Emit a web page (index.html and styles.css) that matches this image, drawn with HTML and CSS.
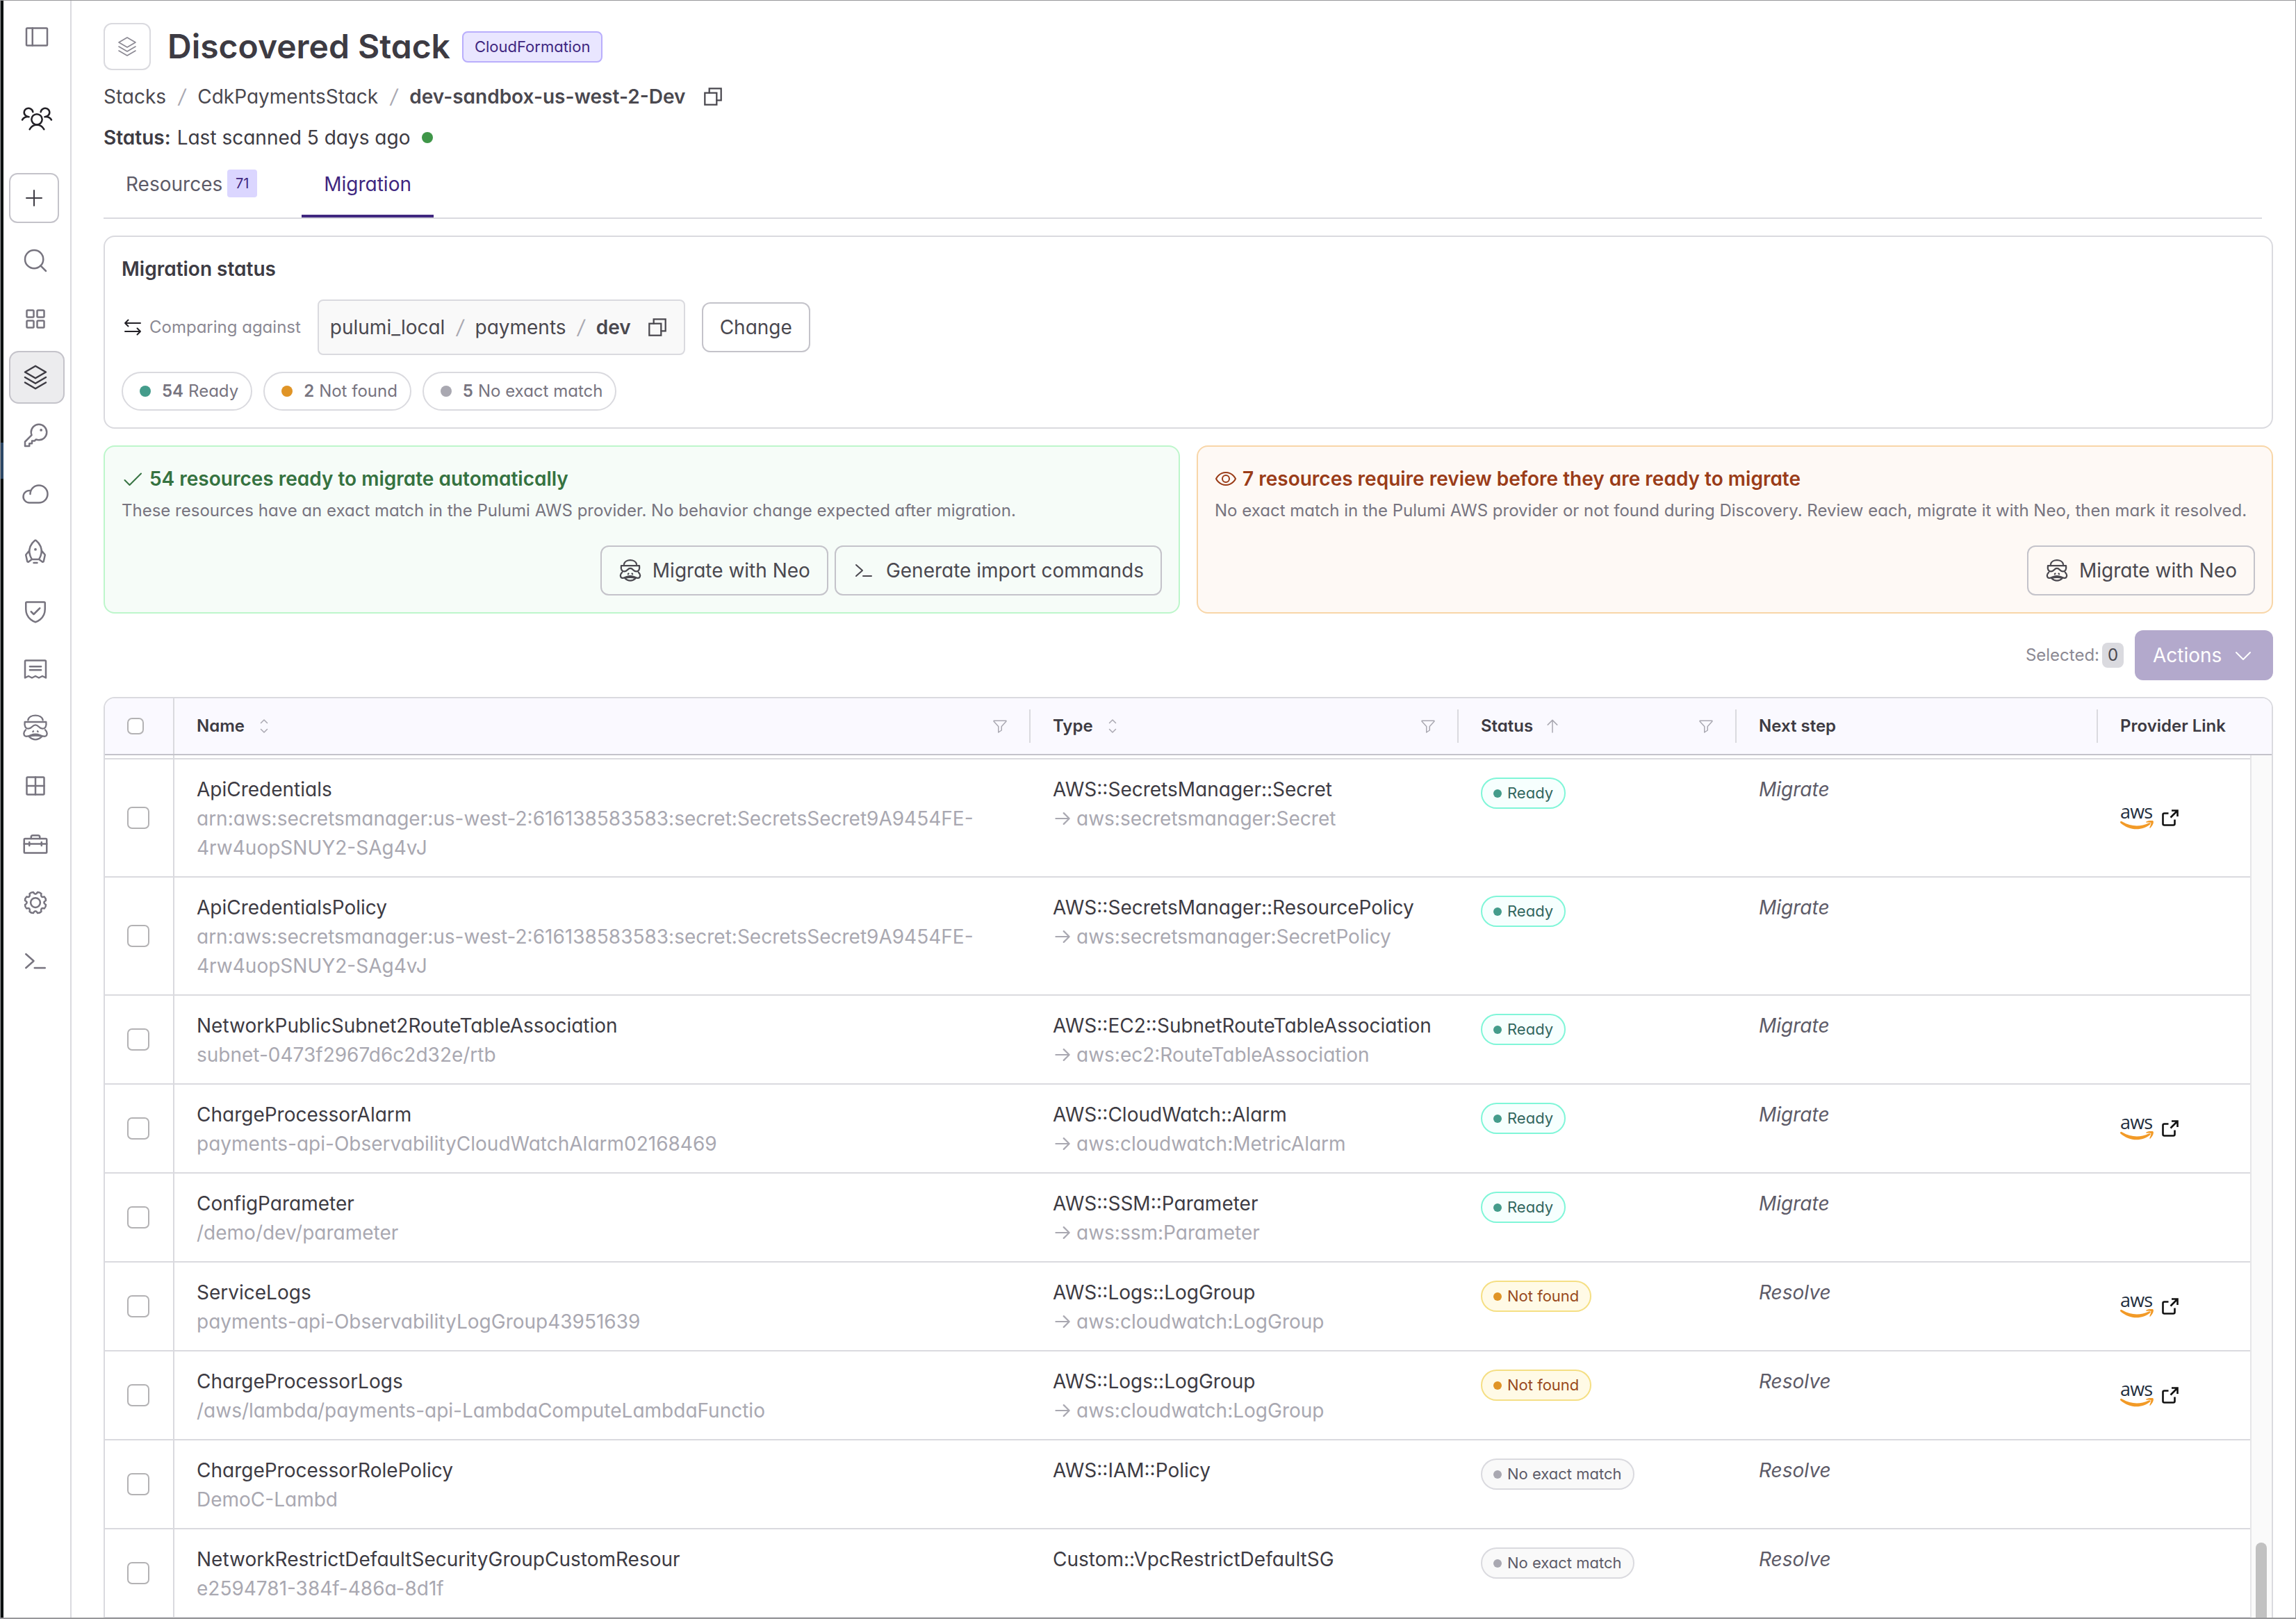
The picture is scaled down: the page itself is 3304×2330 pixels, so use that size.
FILE: index.html
```html
<!DOCTYPE html>
<html lang="en">
<head>
<meta charset="utf-8">
<title>Discovered Stack</title>
<link rel="stylesheet" href="styles.css">
</head>
<body>
<svg class="sprite" aria-hidden="true">
  <symbol id="i-sidebar" viewBox="0 0 256 256"><rect x="32" y="48" width="192" height="160" rx="8"/><path d="M88 48V208"/></symbol>
  <symbol id="i-people" viewBox="30 20 138 110"><path d="M82 47A19 18 0 1 0 50 62Q55 67 65 68Q45 66 36 81M116 47A19 18 0 1 1 148 62Q143 67 133 68Q153 66 162 81"/><circle cx="99" cy="79" r="23"/><path d="M68 122Q78 103 99 103Q120 103 130 122"/></symbol>
  <symbol id="i-plus" viewBox="0 0 256 256"><path d="M40 128H216M128 40V216"/></symbol>
  <symbol id="i-search" viewBox="0 0 256 256"><circle cx="116" cy="116" r="84"/><path d="M175.4 175.4L224 224"/></symbol>
  <symbol id="i-squares" viewBox="0 0 256 256"><rect x="48" y="48" width="64" height="64" rx="8"/><rect x="144" y="48" width="64" height="64" rx="8"/><rect x="48" y="144" width="64" height="64" rx="8"/><rect x="144" y="144" width="64" height="64" rx="8"/></symbol>
  <symbol id="i-stack" viewBox="0 0 256 256"><path d="M32 80L128 136L224 80L128 24ZM32 128L128 184L224 128M32 176L128 232L224 176"/></symbol>
  <symbol id="i-key" viewBox="0 0 256 256"><path d="M93.2 122.8A71.7 71.7 0 0 1 88 95.9C88 57 119.500 24.500 158.400 24A72 72 0 0 1 232 97.600C231.500 136.600 199 168 160.100 168A71.700 71.700 0 0 1 133.200 162.800L120 176H96V200H72V224H32V184Z"/><circle class="dot" cx="180" cy="76" r="12"/></symbol>
  <symbol id="i-cloud" viewBox="0 0 256 256"><path d="M80 128A80 80 0 1 1 160 208H72A56 56 0 1 1 85.900 97.700"/></symbol>
  <symbol id="i-rocket" viewBox="0 0 256 256"><path d="M94.800 192C37.500 95.300 103.900 32.500 123.100 17.700A8 8 0 0 1 132.900 17.700C152.100 32.500 218.500 95.300 161.200 192ZM144 224H112M183.800 110.900L214.100 147.200A8 8 0 0 1 215.800 154.100L203.500 209.700A8 8 0 0 1 190.700 214.200L161.200 192M72.200 110.900L41.900 147.200A8 8 0 0 0 40.200 154.100L52.500 209.700A8 8 0 0 0 65.300 214.200L94.800 192"/><circle class="dot" cx="128" cy="100" r="12"/></symbol>
  <symbol id="i-shield" viewBox="0 0 256 256"><path d="M216 112V56A8 8 0 0 0 208 48H48A8 8 0 0 0 40 56V112C40 208 128 232 128 232S216 208 216 112ZM88 136L112 160L168 104"/></symbol>
  <symbol id="i-receipt" viewBox="0 0 256 256"><path d="M32 208V56A8 8 0 0 1 40 48H216A8 8 0 0 1 224 56V208L192 192L160 208L128 192L96 208L64 192ZM76 104H180M76 136H180"/></symbol>
  <symbol id="i-neo" viewBox="33 21 120 120"><path d="M61 49C66 22 120 22 125 49M47 57H139C142 76 135 86 124 86C106 86 108 70 93 70C78 70 80 86 62 86C51 86 44 76 47 57ZM51 91Q43 98 43 106Q43 121 57 119Q66 118 73 114Q93 106 113 114Q120 118 129 119Q143 121 143 106Q143 98 135 91M64 119Q93 113 122 119Q108 133 93 133Q78 133 64 119ZM84 97L82 99M102 97L104 99"/></symbol>
  <symbol id="i-table" viewBox="0 0 256 256"><rect x="48" y="48" width="160" height="160" rx="8"/><path d="M128 48V208M48 128H208"/></symbol>
  <symbol id="i-toolbox" viewBox="0 0 256 256"><rect x="24" y="76" width="208" height="132" rx="8"/><path d="M88 76V62A16 16 0 0 1 104 46H152A16 16 0 0 1 168 62V76M24 124H232M72 108V140M184 108V140"/></symbol>
  <symbol id="i-gear" viewBox="0 0 256 256"><g transform="translate(128 128)"><circle r="44"/><path d="M96-20Q62 0 96 20Q97 40 82 54Q44 44 54 82Q40 97 20 96Q0 62-20 96Q-40 97-54 82Q-44 44-82 54Q-97 40-96 20Q-62 0-96-20Q-97-40-82-54Q-44-44-54-82Q-40-97-20-96Q0-62 20-96Q40-97 54-82Q44-44 82-54Q97-40 96-20Z"/></g></symbol>
  <symbol id="i-terminal" viewBox="0 0 256 256"><path d="M40 64L112 128L40 192M120 192H216"/></symbol>
  <symbol id="i-copy" viewBox="0 0 256 256"><path d="M168 168H216V40H88V88"/><rect x="40" y="88" width="128" height="128"/></symbol>
  <symbol id="i-swap" viewBox="0 0 256 256"><path d="M76 44L40 80L76 116M40 80H216M180 140L216 176L180 212M216 176H40"/></symbol>
  <symbol id="i-check" viewBox="0 0 256 256"><path d="M36 144L92 200L224 68"/></symbol>
  <symbol id="i-eye" viewBox="0 0 256 256"><path d="M128 56C48 56 16 128 16 128S48 200 128 200S240 128 240 128S208 56 128 56Z"/><circle cx="128" cy="128" r="40"/></symbol>
  <symbol id="i-down" viewBox="0 0 256 256"><path d="M208 96L128 176L48 96"/></symbol>
  <symbol id="i-sort" viewBox="0 0 256 256"><path d="M80 80L128 32L176 80M80 176L128 224L176 176"/></symbol>
  <symbol id="i-up" viewBox="0 0 256 256"><path d="M128 224V36M56 108L128 36L200 108"/></symbol>
  <symbol id="i-right" viewBox="0 0 256 256"><path d="M40 128H216M144 56L216 128L144 200"/></symbol>
  <symbol id="i-filter" viewBox="0 0 256 256"><path d="M34 44H222Q226 50 222 56L152 134V192L104 224V134L34 56Q30 50 34 44Z"/></symbol>
  <symbol id="i-ext" viewBox="0 0 24 24"><path d="M14 1.500H22.500V10M22.500 1.500L12.500 11.500M9.500 5.500H3.500Q1.500 5.500 1.500 7.500V20.500Q1.500 22.500 3.500 22.500H16.500Q18.500 22.500 18.500 20.500V14.500"/></symbol>
  <symbol id="i-smile" viewBox="0 0 48 17"><path d="M0 3Q0-0.500 3 1.500C16 9 29 9 41 3.500Q44 2.500 43.500 5C31 15.500 13 14.500 0 3Z"/><path d="M37.500 1.500Q46-2 47.800 1Q48.500 5 43.500 10.500Q42 11.500 42.500 9.500Q45 4 44.200 3Q42.500 2 38 2.800Q36.500 2.500 37.500 1.500Z"/></symbol>
</svg>

<div class="window">
  <div class="edge"></div>
  <nav class="sidebar">
    <svg class="icon panel-toggle"><use href="#i-sidebar"/></svg>
    <svg class="icon people"><use href="#i-people"/></svg>
    <button class="new"><svg class="icon"><use href="#i-plus"/></svg></button>
    <ul class="nav">
      <li><svg class="icon"><use href="#i-search"/></svg></li>
      <li><svg class="icon"><use href="#i-squares"/></svg></li>
      <li class="active"><svg class="icon"><use href="#i-stack"/></svg></li>
      <li><svg class="icon"><use href="#i-key"/></svg></li>
      <li><svg class="icon"><use href="#i-cloud"/></svg></li>
      <li><svg class="icon"><use href="#i-rocket"/></svg></li>
      <li><svg class="icon"><use href="#i-shield"/></svg></li>
      <li><svg class="icon"><use href="#i-receipt"/></svg></li>
      <li><svg class="icon"><use href="#i-neo"/></svg></li>
      <li><svg class="icon"><use href="#i-table"/></svg></li>
      <li><svg class="icon"><use href="#i-toolbox"/></svg></li>
      <li><svg class="icon"><use href="#i-gear"/></svg></li>
      <li><svg class="icon"><use href="#i-terminal"/></svg></li>
    </ul>
  </nav>

  <main class="main">
    <header class="title-row">
      <span class="title-icon"><svg class="icon"><use href="#i-stack"/></svg></span>
      <h1>Discovered Stack</h1>
      <span class="tag">CloudFormation</span>
    </header>
    <div class="crumbs"><span>Stacks</span><i>/</i><span>CdkPaymentsStack</span><i>/</i><b>dev-sandbox-us-west-2-Dev</b><svg class="icon copy"><use href="#i-copy"/></svg></div>
    <div class="scan"><b>Status:</b> Last scanned 5 days ago<span class="scan-dot"></span></div>
    <div class="tabs">
      <div class="tab">Resources<span class="count">71</span></div>
      <div class="tab current">Migration</div>
    </div>

    <section class="card">
      <h2>Migration status</h2>
      <div class="compare">
        <span class="compare-label"><svg class="icon"><use href="#i-swap"/></svg>Comparing against</span>
        <div class="target"><span>pulumi_local</span><i>/</i><span>payments</span><i>/</i><b>dev</b><svg class="icon copy"><use href="#i-copy"/></svg></div>
        <button class="btn">Change</button>
      </div>
      <div class="pills">
        <span class="pill ready"><b>54</b> Ready</span>
        <span class="pill missing"><b>2</b> Not found</span>
        <span class="pill inexact"><b>5</b> No exact match</span>
      </div>
    </section>

    <div class="callouts">
      <section class="callout ok">
        <h3><svg class="icon"><use href="#i-check"/></svg>54 resources ready to migrate automatically</h3>
        <p>These resources have an exact match in the Pulumi AWS provider. No behavior change expected after migration.</p>
        <div class="callout-actions">
          <button class="btn"><svg class="icon neo"><use href="#i-neo"/></svg>Migrate with Neo</button>
          <button class="btn"><svg class="icon"><use href="#i-terminal"/></svg>Generate import commands</button>
        </div>
      </section>
      <section class="callout review">
        <h3><svg class="icon"><use href="#i-eye"/></svg>7 resources require review before they are ready to migrate</h3>
        <p>No exact match in the Pulumi AWS provider or not found during Discovery. Review each, migrate it with Neo, then mark it resolved.</p>
        <div class="callout-actions">
          <button class="btn"><svg class="icon neo"><use href="#i-neo"/></svg>Migrate with Neo</button>
        </div>
      </section>
    </div>

    <div class="selection">
      <span class="selected">Selected:</span><span class="selected-count">0</span>
      <button class="actions">Actions<svg class="icon"><use href="#i-down"/></svg></button>
    </div>

    <section class="grid">
      <div class="grid-head">
        <div class="h-check"><span class="box"></span></div>
        <div class="h-cell">Name<svg class="icon sort"><use href="#i-sort"/></svg><svg class="icon filter"><use href="#i-filter"/></svg></div>
        <div class="h-cell">Type<svg class="icon sort"><use href="#i-sort"/></svg><svg class="icon filter"><use href="#i-filter"/></svg></div>
        <div class="h-cell">Status<svg class="icon sort"><use href="#i-up"/></svg><svg class="icon filter"><use href="#i-filter"/></svg></div>
        <div class="h-cell">Next step</div>
        <div class="h-cell">Provider Link</div>
      </div>
      <div class="grid-body">
        <div class="rows">
          <div class="row sliver"><div class="c-check"></div></div>
          <div class="row">
            <div class="c-check"><span class="box"></span></div>
            <div class="cell"><div>ApiCredentials</div><div class="sub">arn:aws:secretsmanager:us-west-2:616138583583:secret:SecretsSecret9A9454FE-<br>4rw4uopSNUY2-SAg4vJ</div></div>
            <div class="cell"><div>AWS::SecretsManager::Secret</div><div class="sub"><svg class="icon"><use href="#i-right"/></svg>aws:secretsmanager:Secret</div></div>
            <div class="cell"><span class="badge ready">Ready</span></div>
            <div class="cell step">Migrate</div>
            <div class="link"><span class="aws">aws<svg><use href="#i-smile"/></svg></span><svg class="icon ext"><use href="#i-ext"/></svg></div>
          </div>
          <div class="row">
            <div class="c-check"><span class="box"></span></div>
            <div class="cell"><div>ApiCredentialsPolicy</div><div class="sub">arn:aws:secretsmanager:us-west-2:616138583583:secret:SecretsSecret9A9454FE-<br>4rw4uopSNUY2-SAg4vJ</div></div>
            <div class="cell"><div>AWS::SecretsManager::ResourcePolicy</div><div class="sub"><svg class="icon"><use href="#i-right"/></svg>aws:secretsmanager:SecretPolicy</div></div>
            <div class="cell"><span class="badge ready">Ready</span></div>
            <div class="cell step">Migrate</div>
          </div>
          <div class="row">
            <div class="c-check"><span class="box"></span></div>
            <div class="cell"><div>NetworkPublicSubnet2RouteTableAssociation</div><div class="sub">subnet-0473f2967d6c2d32e/rtb</div></div>
            <div class="cell"><div>AWS::EC2::SubnetRouteTableAssociation</div><div class="sub"><svg class="icon"><use href="#i-right"/></svg>aws:ec2:RouteTableAssociation</div></div>
            <div class="cell"><span class="badge ready">Ready</span></div>
            <div class="cell step">Migrate</div>
          </div>
          <div class="row">
            <div class="c-check"><span class="box"></span></div>
            <div class="cell"><div>ChargeProcessorAlarm</div><div class="sub">payments-api-ObservabilityCloudWatchAlarm02168469</div></div>
            <div class="cell"><div>AWS::CloudWatch::Alarm</div><div class="sub"><svg class="icon"><use href="#i-right"/></svg>aws:cloudwatch:MetricAlarm</div></div>
            <div class="cell"><span class="badge ready">Ready</span></div>
            <div class="cell step">Migrate</div>
            <div class="link"><span class="aws">aws<svg><use href="#i-smile"/></svg></span><svg class="icon ext"><use href="#i-ext"/></svg></div>
          </div>
          <div class="row">
            <div class="c-check"><span class="box"></span></div>
            <div class="cell"><div>ConfigParameter</div><div class="sub">/demo/dev/parameter</div></div>
            <div class="cell"><div>AWS::SSM::Parameter</div><div class="sub"><svg class="icon"><use href="#i-right"/></svg>aws:ssm:Parameter</div></div>
            <div class="cell"><span class="badge ready">Ready</span></div>
            <div class="cell step">Migrate</div>
          </div>
          <div class="row">
            <div class="c-check"><span class="box"></span></div>
            <div class="cell"><div>ServiceLogs</div><div class="sub">payments-api-ObservabilityLogGroup43951639</div></div>
            <div class="cell"><div>AWS::Logs::LogGroup</div><div class="sub"><svg class="icon"><use href="#i-right"/></svg>aws:cloudwatch:LogGroup</div></div>
            <div class="cell"><span class="badge missing">Not found</span></div>
            <div class="cell step">Resolve</div>
            <div class="link"><span class="aws">aws<svg><use href="#i-smile"/></svg></span><svg class="icon ext"><use href="#i-ext"/></svg></div>
          </div>
          <div class="row">
            <div class="c-check"><span class="box"></span></div>
            <div class="cell"><div>ChargeProcessorLogs</div><div class="sub">/aws/lambda/payments-api-LambdaComputeLambdaFunctio</div></div>
            <div class="cell"><div>AWS::Logs::LogGroup</div><div class="sub"><svg class="icon"><use href="#i-right"/></svg>aws:cloudwatch:LogGroup</div></div>
            <div class="cell"><span class="badge missing">Not found</span></div>
            <div class="cell step">Resolve</div>
            <div class="link"><span class="aws">aws<svg><use href="#i-smile"/></svg></span><svg class="icon ext"><use href="#i-ext"/></svg></div>
          </div>
          <div class="row">
            <div class="c-check"><span class="box"></span></div>
            <div class="cell"><div>ChargeProcessorRolePolicy</div><div class="sub">DemoC-Lambd</div></div>
            <div class="cell"><div>AWS::IAM::Policy</div></div>
            <div class="cell"><span class="badge inexact">No exact match</span></div>
            <div class="cell step">Resolve</div>
          </div>
          <div class="row">
            <div class="c-check"><span class="box"></span></div>
            <div class="cell"><div>NetworkRestrictDefaultSecurityGroupCustomResour</div><div class="sub">e2594781-384f-486a-8d1f</div></div>
            <div class="cell"><div>Custom::VpcRestrictDefaultSG</div></div>
            <div class="cell"><span class="badge inexact">No exact match</span></div>
            <div class="cell step">Resolve</div>
          </div>
        </div>
        <div class="scrollbar"><div class="thumb"></div></div>
      </div>
    </section>
  </main>
</div>
</body>
</html>
```
FILE: styles.css
```css
* { box-sizing: border-box; }
html, body { margin: 0; height: 100%; }
body {
  background: #fff;
  color: #3d3b43;
  font-family: Inter, "Noto Sans", sans-serif;
  font-feature-settings: "cv11";
  font-size: 28px;
  line-height: 42px;
  overflow: hidden;
}
h1, h2, h3, p, ul { margin: 0; padding: 0; }
ul { list-style: none; }
button { font: inherit; letter-spacing: inherit; color: inherit; font-feature-settings: inherit; margin: 0; }
b { font-weight: 600; }
.sprite { display: none; }
.icon {
  display: block;
  flex: none;
  width: 40px;
  height: 40px;
  fill: none;
  stroke: currentColor;
  stroke-width: 16;
  stroke-linecap: round;
  stroke-linejoin: round;
}
.dot { fill: currentColor; stroke: none; }

.window {
  display: flex;
  height: 2330px;
  overflow: hidden;
  border: solid #97979a;
  border-width: 1px 1px 2px 1px;
}
.edge {
  flex: none;
  width: 4px;
  background: linear-gradient(#0c1111 636px, #2c4766 636px 688px, #0c1111 688px);
}

/* Sidebar */
.sidebar {
  flex: none;
  width: 98px;
  padding: 32px 0 0 8px;
  border-right: 2px solid #dadadf;
  color: #77747f;
}
.panel-toggle { margin-left: 20px; }
.people {
  width: 46px;
  height: 37px;
  margin: 79px 0 0 17px;
  color: #232127;
  stroke-width: 7.500;
}
.new {
  display: flex;
  align-items: center;
  justify-content: center;
  width: 72px;
  height: 72px;
  margin-top: 60px;
  padding: 0;
  background: #fff;
  border: 2px solid #c4c3ca;
  border-radius: 12px;
  color: #3d3b43;
}
.new .icon { width: 32px; height: 32px; }
.nav { display: flex; flex-direction: column; gap: 8px; margin-top: 16px; }
.nav li {
  display: flex;
  align-items: center;
  width: 80px;
  height: 76px;
  padding-left: 16px;
  border: 2px solid transparent;
  border-radius: 14px;
}
.nav .active { background: #ececee; border-color: #c4c3ca; color: #3d3b43; }
.nav li use[href="#i-neo"] { stroke-width: 7px; }

/* Header */
.main {
  display: flex;
  flex-direction: column;
  flex: 1;
  min-width: 0;
  padding: 32px 32px 0 46px;
}
.title-row { display: flex; align-items: center; height: 68px; }
.title-icon {
  display: flex;
  align-items: center;
  justify-content: center;
  width: 68px;
  height: 68px;
  margin-right: 24px;
  border: 2px solid #dadadf;
  border-radius: 12px;
  color: #8b8993;
}
.title-icon .icon { width: 32px; height: 32px; stroke-width: 13; }
h1 { font-size: 48px; line-height: 60px; font-weight: 600; }
.tag {
  height: 45px;
  margin-left: 17px;
  padding: 0 16px;
  border: 2px solid #b9aefc;
  border-radius: 8px;
  background: #e9e6ff;
  color: #402780;
  font-size: 22px;
  line-height: 41px;
}
.crumbs, .target { display: flex; align-items: center; color: #4a484f; }
.crumbs { height: 42px; margin-top: 17px; }
.crumbs i, .target i { margin: 0 17.500px; color: #a9a8b1; font-style: italic; }
.target i { margin: 0 16.500px; }
.copy { width: 34px; height: 34px; margin-left: 23px; stroke-linejoin: miter; stroke-width: 17; }
.target .copy { margin-left: 21px; }
.scan { display: flex; align-items: center; gap: 9px; height: 42px; margin-top: 17px; }
.scan-dot { width: 16px; height: 16px; margin-left: 8px; border-radius: 50%; background: #3f9648; }
.tabs {
  display: flex;
  height: 78px;
  width: 3106px;
  margin-top: 18px;
  border-bottom: 2px solid #dadadf;
}
.tab {
  display: flex;
  align-items: flex-start;
  height: 76px;
  padding: 7px 32px 0;
  color: #5d5b68;
}
.tab.current { border-bottom: 4px solid #402780; color: #402780; }
.tab + .tab { margin-left: 32px; }
.count {
  width: 43px;
  height: 40px;
  margin: 0 0 0 7px;
  border-radius: 4px;
  background: #dbd6ff;
  color: #402780;
  font-size: 20px;
  line-height: 40px;
  text-align: center;
}

/* Migration status */
.card {
  height: 278px;
  margin-top: 24px;
  padding: 25px 24px 24px;
  border: 2px solid #dadadf;
  border-radius: 16px;
}
h2 { font-size: 28px; line-height: 42px; font-weight: 600; }
.compare { display: flex; align-items: center; height: 80px; margin-top: 23px; }
.compare-label { display: flex; align-items: center; color: #8b8993; font-size: 24px; }
.compare-label .icon { width: 32px; height: 32px; margin-right: 8px; color: #232127; }
.target {
  height: 80px;
  margin: 0 24px;
  padding: 0 21px 0 16px;
  border: 2px solid #dadadf;
  border-radius: 8px;
  background: #f9f9f9;
}
.btn {
  display: flex;
  align-items: center;
  height: 72px;
  padding: 0 24px;
  border: 2px solid #c4c3ca;
  border-radius: 12px;
  background: transparent;
  color: #4a484f;
}
.pills { display: flex; gap: 16px; margin-top: 24px; }
.pill {
  display: flex;
  align-items: center;
  gap: 7px;
  height: 56px;
  padding: 0 18px 0 24px;
  border: 2px solid #dadadf;
  border-radius: 28px;
  color: #77747f;
  font-size: 24px;
}
.pill::before, .badge::before { content: ""; border-radius: 50%; background: currentColor; }
.pill::before { width: 16px; height: 16px; margin-right: 9px; }
.ready::before { background: #449c8b; }
.missing::before { background: #e09426; }
.inexact::before { background: #a9a8b1; }

/* Callouts */
.callouts { display: grid; grid-template-columns: 1fr 1fr; gap: 24px; margin-top: 24px; }
.callout { height: 242px; padding: 25px 24px 24px; border: 2px solid; border-radius: 16px; }
.callout.ok { border-color: #bdf6cb; background: #f6fcf8; }
.callout.review { border-color: #f8d6a8; background: #fef9f5; }
h3 { display: flex; align-items: center; height: 42px; font-size: 28px; line-height: 42px; font-weight: 600; }
h3 .icon { width: 32px; height: 32px; margin-right: 8px; }
.ok h3 { color: #357240; }
.review h3 { color: #9a3c18; }
.callout p { margin-top: 5px; color: #77747f; font-size: 24px; line-height: 40px; white-space: nowrap; }
.callout-actions { display: flex; justify-content: flex-end; gap: 9px; margin-top: 30px; }
.callout-actions .icon { width: 32px; height: 32px; margin-right: 16px; }
.callout-actions .neo { width: 34px; height: 34px; margin-right: 15px; }
.callout-actions use[href="#i-neo"] { stroke-width: 8px; }

/* Selection */
.selection { display: flex; align-items: center; justify-content: flex-end; height: 72px; margin-top: 24px; }
.selected { color: #8b8993; font-size: 24px; }
.selected-count {
  width: 31px;
  height: 36px;
  margin: 0 16px 0 4px;
  border-radius: 8px;
  background: #dadadf;
  color: #4a484f;
  font-size: 24px;
  line-height: 36px;
  text-align: center;
}
.actions {
  display: flex;
  align-items: center;
  gap: 15px;
  width: 199px;
  height: 72px;
  padding: 0 26px;
  border: 0;
  border-radius: 12px;
  background: #b3a9cc;
  color: #fff;
}
.actions .icon { width: 32px; height: 32px; stroke-width: 16; }

/* Resource grid */
.grid {
  height: 1400px;
  flex: none;
  margin-top: 24px;
  border: 2px solid #dadadf;
  border-radius: 16px;
  overflow: hidden;
}
.grid-head, .row { display: grid; grid-template-columns: 100px 1232px 616px 400px 520px 1fr; }
.grid-head {
  height: 82px;
  border-bottom: 2px solid #c4c3ca;
  background: #faf9ff;
  font-size: 24px;
  font-weight: 600;
}
.h-check { display: flex; align-items: center; padding-left: 32px; border-right: 2px solid #dadadf; }
.box { width: 32px; height: 32px; border: 2px solid #b3b2b4; border-radius: 7px; background: #fff; }
.h-check .box { width: 24px; height: 24px; }
.h-cell { display: flex; align-items: center; height: 48px; margin-top: 16px; padding: 0 30px 0 32px; border-right: 2px solid #dadadf; }
.h-cell:last-child { border-right: 0; }
.h-cell .icon { width: 24px; height: 24px; color: #a9a8b1; }
.h-cell .sort { margin-left: 16px; }
.h-cell .filter { margin-left: auto; }
.grid-body { display: flex; height: 1316px; }
.rows { flex: 1; }
.row { border-bottom: 2px solid #dadadf; }
.sliver { height: 6px; }
.c-check { display: flex; align-items: center; padding-left: 32px; border-right: 2px solid #dadadf; }
.cell { padding: 22px 32px 20px; white-space: nowrap; }
.sub { color: #a9a8b1; }
.sub .icon { display: inline-block; width: 28px; height: 28px; margin-right: 6px; vertical-align: -4px; stroke-width: 20; }
.badge {
  display: inline-flex;
  align-items: center;
  gap: 8px;
  height: 45px;
  margin-top: 4px;
  padding: 0 16px;
  border: 2px solid;
  border-radius: 23px;
  font-size: 22px;
  line-height: 41px;
  vertical-align: top;
}
.badge::before { width: 12px; height: 12px; }
.badge.ready { border-color: #80f6d8; background: #f6fffe; color: #32675e; }
.badge.missing { border-color: #f5df84; background: #fffae6; color: #994a1d; }
.badge.inexact { border-color: #dadadf; background: #f9f9f9; color: #5d5b68; }
.step { color: #5d5b68; font-style: italic; }
.link { display: flex; align-items: center; padding-left: 32px; }
.aws {
  display: flex;
  flex-direction: column;
  width: 48px;
  height: 29px;
  color: #252f3e;
  font: 500 27px/10px "Open Sans", "Noto Sans", sans-serif;
  letter-spacing: -0.800px;
}
.aws svg { display: block; flex: none; width: 48px; height: 17px; margin-top: 8px; fill: #f29a27; }
.ext { width: 24px; height: 24px; margin-left: 12px; color: #111; stroke-width: 2.600; stroke-linecap: butt; stroke-linejoin: miter; }
.scrollbar { display: flex; align-items: flex-start; width: 31px; padding: 1133px 0 0 6px; border-left: 2px solid #e6e6e8; background: #fafafa; }
.thumb { width: 16px; height: 200px; border-radius: 8px 8px 0 0; background: #c1c1c1; }
```
